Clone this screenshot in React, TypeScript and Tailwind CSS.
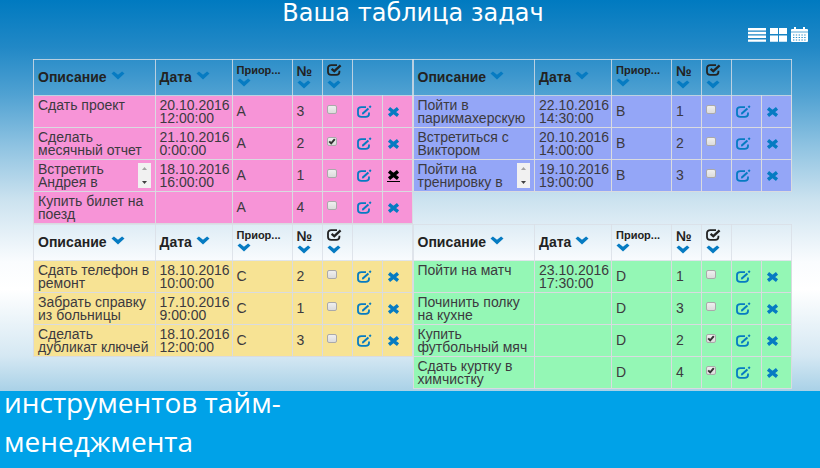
import { useRef, useState } from "react";

type Task = {
  id: number;
  text: string;
  date: string;
  time: string;
  no: number;
  done?: boolean;
  overflow?: boolean;
  activeDelete?: boolean;
};

type Group = { letter: string; color: string; tasks: Task[] };

const groups: Group[] = [
  {
    letter: "A",
    color: "bg-[#f794d7]",
    tasks: [
      { id: 1, text: "Сдать проект", date: "20.10.2016", time: "12:00:00", no: 3 },
      { id: 2, text: "Сделать месячный отчет", date: "21.10.2016", time: "0:00:00", no: 2, done: true },
      { id: 3, text: "Встретить Андрея в", date: "18.10.2016", time: "16:00:00", no: 1, overflow: true, activeDelete: true },
      { id: 4, text: "Купить билет на поезд", date: "", time: "", no: 4 },
    ],
  },
  {
    letter: "B",
    color: "bg-[#94a6f7]",
    tasks: [
      { id: 5, text: "Пойти в парикмахерскую", date: "22.10.2016", time: "14:30:00", no: 1 },
      { id: 6, text: "Встретиться с Виктором", date: "20.10.2016", time: "14:00:00", no: 2 },
      { id: 7, text: "Пойти на тренировку в", date: "19.10.2016", time: "19:00:00", no: 3, overflow: true },
    ],
  },
  {
    letter: "C",
    color: "bg-[#f7e394]",
    tasks: [
      { id: 8, text: "Сдать телефон в ремонт", date: "18.10.2016", time: "10:00:00", no: 2 },
      { id: 9, text: "Забрать справку из больницы", date: "17.10.2016", time: "9:00:00", no: 1 },
      { id: 10, text: "Сделать дубликат ключей", date: "18.10.2016", time: "12:00:00", no: 3 },
    ],
  },
  {
    letter: "D",
    color: "bg-[#94f7b5]",
    tasks: [
      { id: 11, text: "Пойти на матч", date: "23.10.2016", time: "17:30:00", no: 1 },
      { id: 12, text: "Починить полку на кухне", date: "", time: "", no: 3 },
      { id: 13, text: "Купить футбольный мяч", date: "", time: "", no: 2, done: true },
      { id: 14, text: "Сдать куртку в химчистку", date: "", time: "", no: 4, done: true },
    ],
  },
];

function SortButton({ label }: { label: string }) {
  return (
    <button type="button" aria-label={label} className="block text-[#067bc2]">
      <svg width="14" height="9" viewBox="0 0 14 9" className="block" aria-hidden="true">
        <path d="M0.5 2.6 2.9 0.4 7 3.8 11.1 0.4 13.5 2.6 7 8.4Z" fill="currentColor" />
      </svg>
    </button>
  );
}

function DoneIcon() {
  return (
    <svg width="15" height="12" viewBox="0 0 15 12" fill="none" stroke="currentColor" className="block" aria-hidden="true">
      <path d="M10 1.2H4.2C2.2 1.2 1 2.3 1 4V8C1 9.8 2.2 10.8 4.2 10.8H9.3C11.3 10.8 12.4 9.8 12.4 8V6.8" strokeWidth="1.8" />
      <path d="M4.6 4.8 7.3 7.1 13.6 1.3" strokeWidth="2.3" />
    </svg>
  );
}

function EditIcon() {
  return (
    <svg width="15" height="13" viewBox="0 0 15 13" fill="none" stroke="currentColor" className="block" aria-hidden="true">
      <path d="M9 2.2H4.4C2.3 2.2 1 3.3 1 5V9C1 10.8 2.3 11.9 4.4 11.9H8.6C10.7 11.9 12 10.8 12 9V7.6" strokeWidth="1.8" />
      <path d="M5.8 8.6 11.4 3.4" strokeWidth="2" />
      <path d="M4.9 9.5 5.4 7.4 7.2 9Z" fill="currentColor" stroke="none" />
      <path d="M12.4 2.4 13.8 1.1" strokeWidth="2" />
    </svg>
  );
}

function DeleteIcon() {
  return (
    <svg width="13" height="10" viewBox="0 0 13 10" fill="none" stroke="currentColor" className="block" aria-hidden="true">
      <path d="M2 1.4 11 8.6M11 1.4 2 8.6" strokeWidth="3.4" />
    </svg>
  );
}

function Description({ text, overflow }: { text: string; overflow?: boolean }) {
  const box = useRef<HTMLDivElement>(null);
  return (
    <div className="flex h-[30px] gap-1 pt-0.5 pr-1">
      <div ref={box} className="min-w-0 flex-1">
        {text}
      </div>
      {overflow && (
        <div className="flex h-[25px] w-[13px] flex-none flex-col items-center justify-between bg-[#f1f1f1] py-1">
          <button type="button" aria-label="Прокрутить вверх" onClick={() => box.current?.scrollBy(0, -13)}>
            <svg width="5" height="3" viewBox="0 0 5 3" className="block" aria-hidden="true">
              <path d="M0 3 2.5 0 5 3Z" fill="#a3a3a3" />
            </svg>
          </button>
          <button type="button" aria-label="Прокрутить вниз" onClick={() => box.current?.scrollBy(0, 13)}>
            <svg width="5" height="3" viewBox="0 0 5 3" className="block" aria-hidden="true">
              <path d="M0 0 2.5 3 5 0Z" fill="#404040" />
            </svg>
          </button>
        </div>
      )}
    </div>
  );
}

function DoneBox({ task }: { task: Task }) {
  const [done, setDone] = useState(Boolean(task.done));
  return (
    <label className="relative mb-1 block h-[9px] w-[10px]">
      <input
        type="checkbox"
        checked={done}
        onChange={() => setDone(!done)}
        aria-label={"Выполнено: " + task.text}
        className="block h-[9px] w-[10px] appearance-none rounded-xs border border-[#aaa9aa] bg-linear-to-b from-[#efefef] to-[#dcdcdc]"
      />
      {done && (
        <svg viewBox="0 0 10 9" className="pointer-events-none absolute inset-0" fill="none" aria-hidden="true">
          <path d="M2.2 4.4 4.2 6.4 7.8 2.2" stroke="#333" strokeWidth="2" />
        </svg>
      )}
    </label>
  );
}

const cell = "h-8 border border-[#d9dbe0] p-0 pl-1";
const head = "h-9 border border-[#d9dfe6]/80 p-0 pl-1 text-left";

function TaskTable({ group }: { group: Group }) {
  return (
    <table className="w-full table-fixed border-collapse text-sm leading-[13px] text-[#3c3a3f]">
      <colgroup>
        <col />
        <col className="w-[77px]" />
        <col className="w-[60px]" />
        <col className="w-[30px]" />
        <col className="w-[30px]" />
        <col className="w-[30px]" />
        <col className="w-[30px]" />
      </colgroup>
      <thead className="text-[#222]">
        <tr>
          <th className={head}>
            <div className="flex items-start gap-1">
              Описание <SortButton label="Сортировать по описанию" />
            </div>
          </th>
          <th className={head}>
            <div className="flex items-start gap-1">
              Дата <SortButton label="Сортировать по дате" />
            </div>
          </th>
          <th className={head}>
            <div className="flex flex-col gap-px pb-1 text-[11px]">
              Приор... <SortButton label="Сортировать по приоритету" />
            </div>
          </th>
          <th className={head}>
            <div className="flex flex-col gap-0.5 pb-0.5">
              № <SortButton label="Сортировать по номеру" />
            </div>
          </th>
          <th className={head} aria-label="Выполнено">
            <div className="flex flex-col gap-1 pb-0.5">
              <DoneIcon />
              <SortButton label="Сортировать по выполнению" />
            </div>
          </th>
          <th className={head} colSpan={2} aria-label="Действия" />
        </tr>
      </thead>
      <tbody className={group.color}>
        {group.tasks.map((task) => (
          <tr key={task.id}>
            <td className={cell}>
              <Description text={task.text} overflow={task.overflow} />
            </td>
            <td className={cell}>
              {task.date}
              <br />
              {task.time}
            </td>
            <td className={cell}>{group.letter}</td>
            <td className={cell}>{task.no}</td>
            <td className={cell}>
              <DoneBox task={task} />
            </td>
            <td className={cell}>
              <button type="button" aria-label={"Изменить: " + task.text} className="block text-[#067bc2]">
                <EditIcon />
              </button>
            </td>
            <td className={cell}>
              <button
                type="button"
                aria-label={"Удалить: " + task.text}
                className={
                  task.activeDelete
                    ? "block border-b border-black pb-px text-black"
                    : "block text-[#067bc2]"
                }
              >
                <DeleteIcon />
              </button>
            </td>
          </tr>
        ))}
      </tbody>
    </table>
  );
}

function ViewSwitch() {
  return (
    <nav aria-label="Вид" className="flex justify-end gap-1 pr-3 text-white">
      <button type="button" aria-label="Список">
        <svg width="18" height="14" viewBox="0 0 18 14" className="block" fill="currentColor" aria-hidden="true">
          <path d="M0 0H18V2.4H0ZM0 3.8H18V6.2H0ZM0 7.6H18V10H0ZM0 11.4H18V13.8H0Z" />
        </svg>
      </button>
      <button type="button" aria-label="Плитка">
        <svg width="17" height="14" viewBox="0 0 17 14" className="block" fill="currentColor" aria-hidden="true">
          <path d="M0 0H8V6H0ZM9 0H17V6H9ZM0 7.4H8V13.8H0ZM9 7.4H17V13.8H9Z" />
        </svg>
      </button>
      <button type="button" aria-label="Календарь">
        <svg width="17" height="15" viewBox="0 0 17 15" className="block" aria-hidden="true">
          <path d="M0 3Q0 2 1 2H3V0H5V2H12V0H14V2H16Q17 2 17 3V14Q17 15 16 15H1Q0 15 0 14Z" fill="currentColor" />
          <path d="M0 5H17" stroke="#2e8fca" strokeWidth="0.8" />
          <path d="M2 8H15M2 10.5H15M2 13H15" stroke="#2e8fca" strokeWidth="1" strokeDasharray="1.4 1.4" />
        </svg>
      </button>
    </nav>
  );
}

export default function App() {
  return (
    <div className="flex min-h-screen flex-col font-['Liberation_Sans',Arial,sans-serif]">
      <main className="bg-[linear-gradient(to_bottom,#007ac0_0%,#2188c6_12%,#4fa1d2_24%,#8dc2e1_37%,#cbe2ef_51%,#fafcfe_67%,#ffffff_74%,#d5e8f3_91%,#a9d1e7_100%)] pb-0.5">
        <h1 className="pl-1.5 text-center font-['DejaVu_Sans',Verdana,sans-serif] text-2xl leading-[27px] text-white">
          Ваша таблица задач
        </h1>
        <ViewSwitch />
        <div className="grid grid-cols-2 items-start pt-[17px] pr-7 pl-[33px]">
          {groups.map((group) => (
            <TaskTable key={group.letter} group={group} />
          ))}
        </div>
      </main>
      <footer className="flex-1 bg-[#00a2e8] pl-1">
        <p className="-mt-2 w-[300px] font-['Open_Sans','Noto_Sans',sans-serif] text-[28px] leading-[39px] text-white">
          инструментов тайм-менеджмента
        </p>
      </footer>
    </div>
  );
}
